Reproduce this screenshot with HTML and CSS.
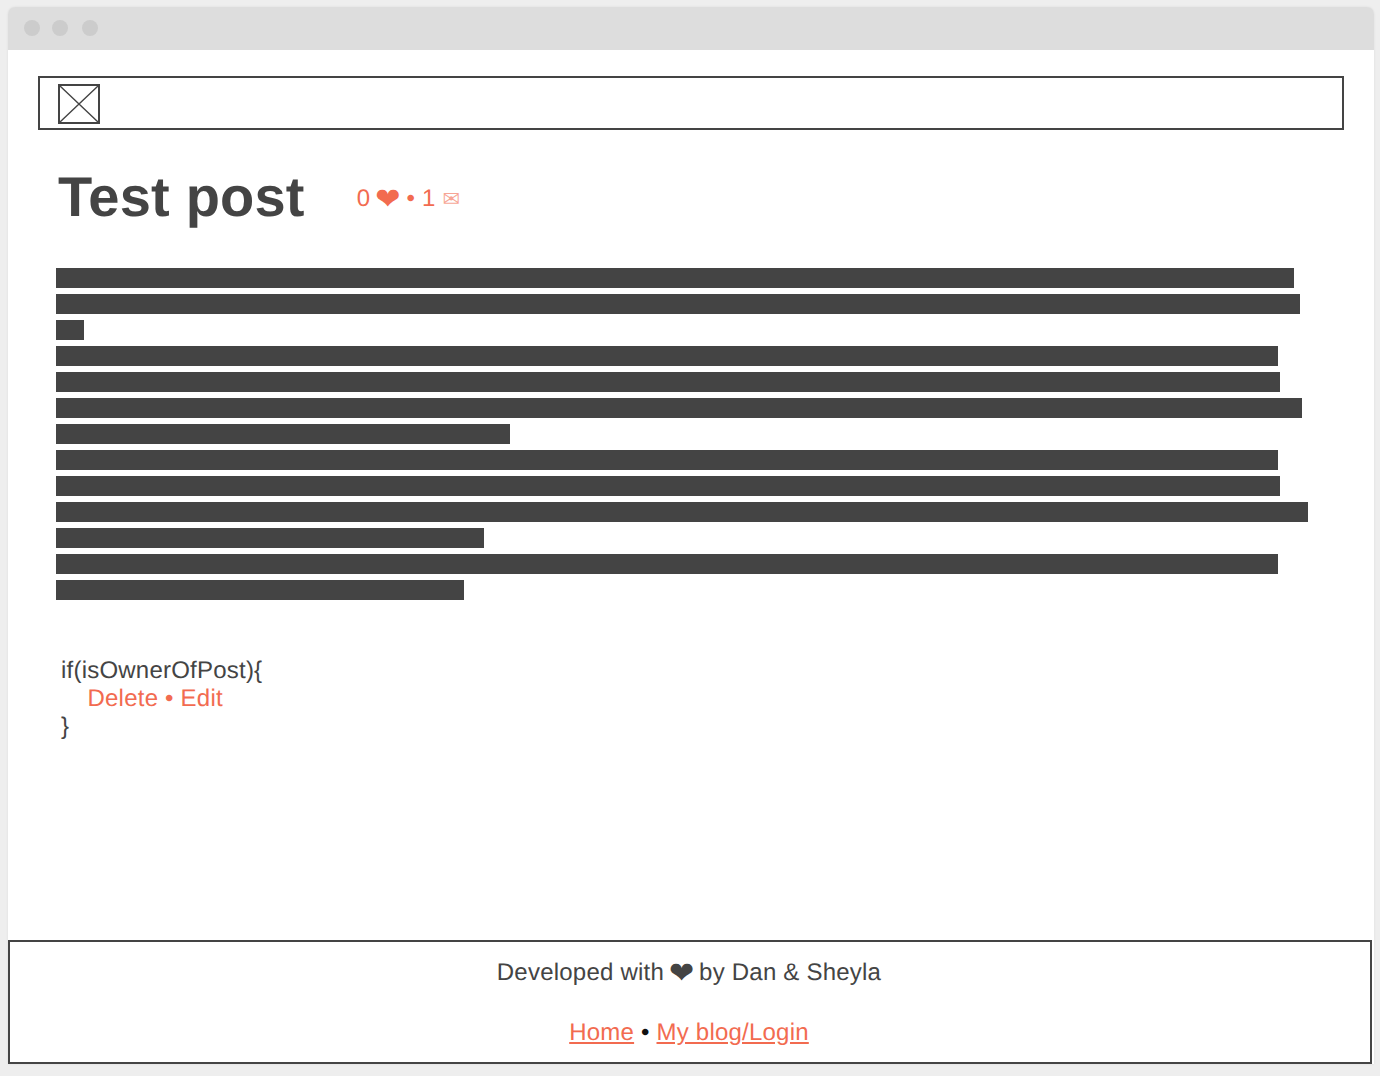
FILE: index.html
```html
<!DOCTYPE html>
<html lang="en">
<head>
    <meta charset="UTF-8">
    <meta name="viewport" content="width=device-width, initial-scale=1.0">
    <title>Test post</title>
    <link rel="stylesheet" href="styles.css">
</head>
<body>
    <!-- browser window -->
    <div class="window">
        <div class="titlebar">
            <span class="dot"></span>
            <span class="dot"></span>
            <span class="dot dot-last"></span>
        </div>
        <div class="page">
            <!-- header with logo placeholder -->
            <div class="header">
                <svg class="logo" width="42" height="40" viewBox="0 0 42 40">
                    <rect x="1" y="1" width="40" height="38" fill="none" stroke="#444" stroke-width="2"/>
                    <path d="M2 2L40 38M40 2L2 38" fill="none" stroke="#444" stroke-width="1.4"/>
                </svg>
            </div>
            <div class="title-row">
                <h1 class="title">Test post</h1>
                <div class="meta">0 <span class="heart heart-meta">❤</span> • 1 <span class="mail">✉</span></div>
            </div>
            <!-- redacted post text -->
            <div class="bars">
                <div class="bar" style="width:1238px"></div>
                <div class="bar" style="width:1244px"></div>
                <div class="bar" style="width:28px"></div>
                <div class="bar" style="width:1222px"></div>
                <div class="bar" style="width:1224px"></div>
                <div class="bar" style="width:1246px"></div>
                <div class="bar" style="width:454px"></div>
                <div class="bar" style="width:1222px"></div>
                <div class="bar" style="width:1224px"></div>
                <div class="bar" style="width:1252px"></div>
                <div class="bar" style="width:428px"></div>
                <div class="bar" style="width:1222px"></div>
                <div class="bar" style="width:408px"></div>
            </div>
            <div class="owner">
                <div>if(isOwnerOfPost){</div>
                <div class="actions">Delete • Edit</div>
                <div>}</div>
            </div>
            <div class="footer">
                <p class="credit">Developed with <span class="heart heart-credit">❤</span> by Dan &amp; Sheyla</p>
                <p class="links"><a href="#">Home</a> • <a href="#">My blog/Login</a></p>
            </div>
        </div>
    </div>
</body>
</html>
```

FILE: styles.css
```css
*{
    margin: 0;
    padding: 0;
    box-sizing: border-box;
}
body{
    background-color: #eeeeee;
    font-family: "Liberation Sans", Arial, sans-serif;
    color: #444444;
    padding: 7px 6px 12px 8px;
    text-rendering: geometricPrecision;
    letter-spacing: .22px;
}
.window{
    height: 1057px;
    display: flex;
    flex-direction: column;
    border-radius: 7px 7px 0 0;
    overflow: hidden;
    box-shadow: 0 0 2px #d8d8d8;
}
.titlebar{
    height: 43px;
    flex: none;
    background-color: #dddddd;
    display: flex;
    align-items: center;
    padding: 0 0 1px 16px;
}
.dot{
    width: 16px;
    height: 16px;
    border-radius: 50%;
    background-color: #cccccc;
    margin-right: 12px;
}
.dot-last{
    margin-left: 2px;
}
.page{
    flex: 1;
    background-color: #ffffff;
    display: flex;
    flex-direction: column;
    padding-top: 26px;
}
.header{
    height: 54px;
    flex: none;
    margin: 0 30px;
    border: 2px solid #444444;
    padding: 6px 18px;
}
.logo{
    display: block;
}
.title-row{
    display: flex;
    align-items: center;
    margin: 34px 0 0 50px;
    height: 66px;
}
.title{
    font-size: 56px;
    font-weight: bold;
    line-height: 66px;
}
.meta{
    margin: 4px 0 0 52px;
    font-size: 24px;
    line-height: 28px;
    color: #f26b50;
}
.heart{
    font-family: "DejaVu Sans", sans-serif;
    font-size: 30px;
    line-height: 20px;
}
.heart-meta{
    margin: 0 -1px 0 -2px;
    vertical-align: -3px;
}
.heart-credit{
    margin: 0 -2px 0 -2px;
    vertical-align: -3px;
}
.mail{
    font-family: "DejaVu Sans", sans-serif;
    font-size: 21px;
    line-height: 20px;
    opacity: .6;
}
.bars{
    margin: 38px 0 0 48px;
}
.bar{
    height: 20px;
    margin-bottom: 6px;
    background-color: #444444;
}
.owner{
    margin: 51px 0 0 53px;
    font-size: 24px;
    line-height: 28px;
}
.actions{
    padding-left: 26.5px;
    color: #f26b50;
}
.footer{
    margin: auto 2px 0 0;
    height: 124px;
    flex: none;
    border: 2px solid #444444;
    text-align: center;
    font-size: 24px;
    line-height: 28px;
    padding: 17px 2px 0 0;
}
.links{
    margin-top: 32px;
    color: #111111;
}
.links a{
    color: #f26b50;
}
```
